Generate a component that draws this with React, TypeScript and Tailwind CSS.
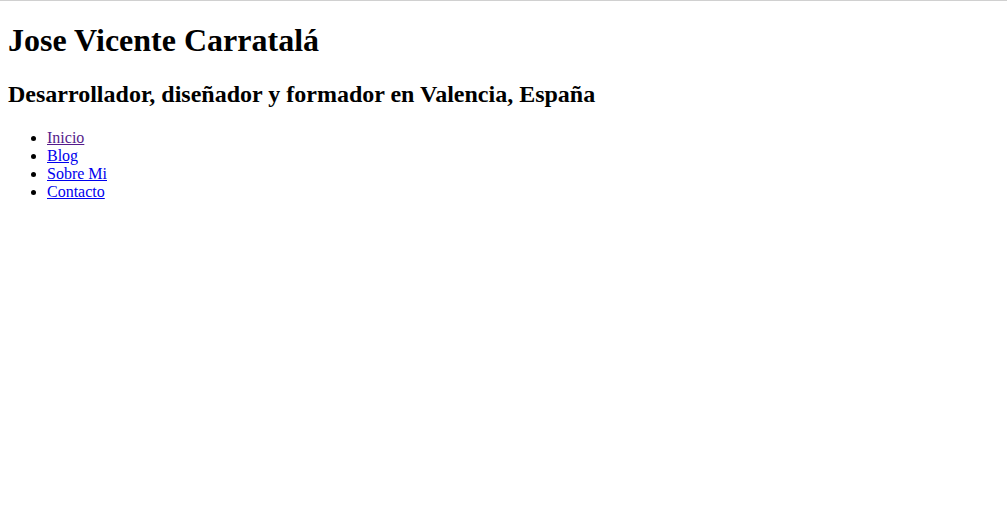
import React from "react";

export default function App() {
  return (
    <div className="min-h-[524px] bg-white border-t border-[#d0d0d0] font-['Liberation_Serif','Times_New_Roman',serif] text-black text-[16px]">
      <div className="flex flex-col px-2 pt-[21px]">
        <h1 className="text-[32px] font-bold leading-[37px]">Jose Vicente Carratalá</h1>
        <h2 className="mt-[21px] text-[24px] font-bold leading-[29px]">
          Desarrollador, diseñador y formador en Valencia, España
        </h2>
        <ul className="mt-[20px] list-disc pl-[39px] leading-[18px]">
          <li>
            <a href="#" className="text-[#551a8b] underline">Inicio</a>
          </li>
          <li>
            <a href="#" className="text-[#0000ee] underline">Blog</a>
          </li>
          <li>
            <a href="#" className="text-[#0000ee] underline">Sobre Mi</a>
          </li>
          <li>
            <a href="#" className="text-[#0000ee] underline">Contacto</a>
          </li>
        </ul>
      </div>
    </div>
  );
}
